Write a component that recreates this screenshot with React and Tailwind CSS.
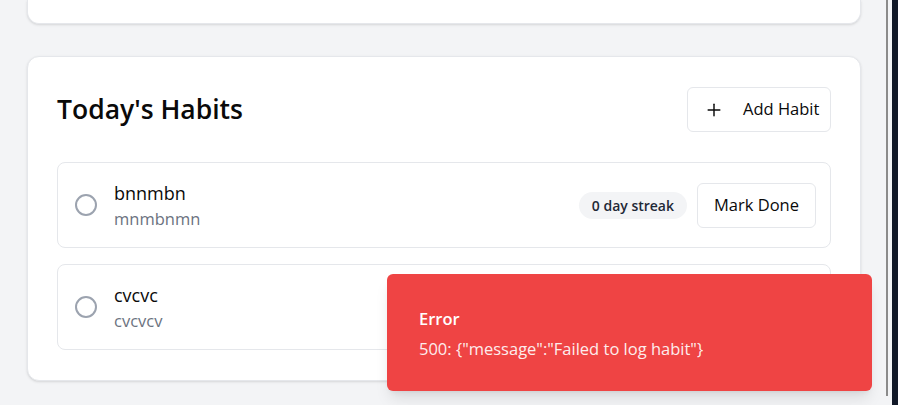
import { Plus, Circle } from "lucide-react";

const habits = [
  { id: 1, name: "bnnmbn", description: "mnmbnmn", streak: 0 },
  { id: 2, name: "cvcvc", description: "cvcvcv", streak: 0 },
];

const HabitRow = ({ habit }) => (
  <div className="flex items-center justify-between rounded-lg border border-[#e5e7eb] bg-white py-4 pl-4 pr-[14px]">
    <div className="flex items-center gap-4">
      <Circle className="h-6 w-6 text-[#9ca3af]" strokeWidth={2} />
      <div>
        <p className="text-[18px] leading-7 text-[#0a0a0a]">{habit.name}</p>
        <p className="text-[16.5px] leading-6 text-[#6b7280]">{habit.description}</p>
      </div>
    </div>
    <div className="flex items-center gap-2.5">
      <span className="rounded-full bg-[#f3f4f6] px-[13px] py-1 text-[14px] font-semibold leading-[19px] text-[#1f2937]">
        {habit.streak} day streak
      </span>
      <button className="h-[45px] rounded-md border border-[#e5e7eb] bg-white px-4 text-[16.5px] text-[#0a0a0a]">
        Mark Done
      </button>
    </div>
  </div>
);

export default function App() {
  return (
    <div className="relative flex h-[405px] w-[898px] overflow-hidden bg-[#f3f4f6] font-['Open_Sans',sans-serif]">
      <main className="flex flex-1 flex-col gap-8 pl-[27px] pr-[25px]">
        <div className="h-[24px] rounded-b-xl border border-t-0 border-[#e5e7eb] bg-white shadow-sm" />

        <section className="rounded-xl border border-[#e5e7eb] bg-white px-[29px] pt-[30px] pb-[30px] shadow-sm">
          <div className="flex items-center justify-between">
            <h2 className="text-[26.5px] font-semibold text-[#0a0a0a]">Today's Habits</h2>
            <button className="flex h-[45px] w-[144px] items-center gap-[19px] whitespace-nowrap rounded-md border border-[#e5e7eb] bg-white pl-[16px] text-[16.5px] text-[#0a0a0a]">
              <Plus className="h-5 w-5" strokeWidth={1.75} />
              Add Habit
            </button>
          </div>

          <div className="mt-[30px] flex flex-col gap-4">
            {habits.map((habit) => (
              <HabitRow key={habit.id} habit={habit} />
            ))}
          </div>
        </section>
      </main>

      {/* scrollbar + right panel edge */}
      <div className="flex w-[2px] flex-col">
        <div className="h-[396px] bg-[#8b8b8b]" />
      </div>
      <div className="w-[4px]" />
      <div className="w-[6px] bg-[#111827]" />

      {/* toast */}
      <div className="absolute left-[387px] top-[274px] h-[117px] w-[485px] rounded-md bg-[#ef4444] px-8 pt-[30px] text-white shadow-lg">
        <p className="text-[16.5px] font-semibold leading-[30px]">Error</p>
        <p className="text-[16.5px] leading-[30px] opacity-90">500: {'{"message":"Failed to log habit"}'}</p>
      </div>
    </div>
  );
}
